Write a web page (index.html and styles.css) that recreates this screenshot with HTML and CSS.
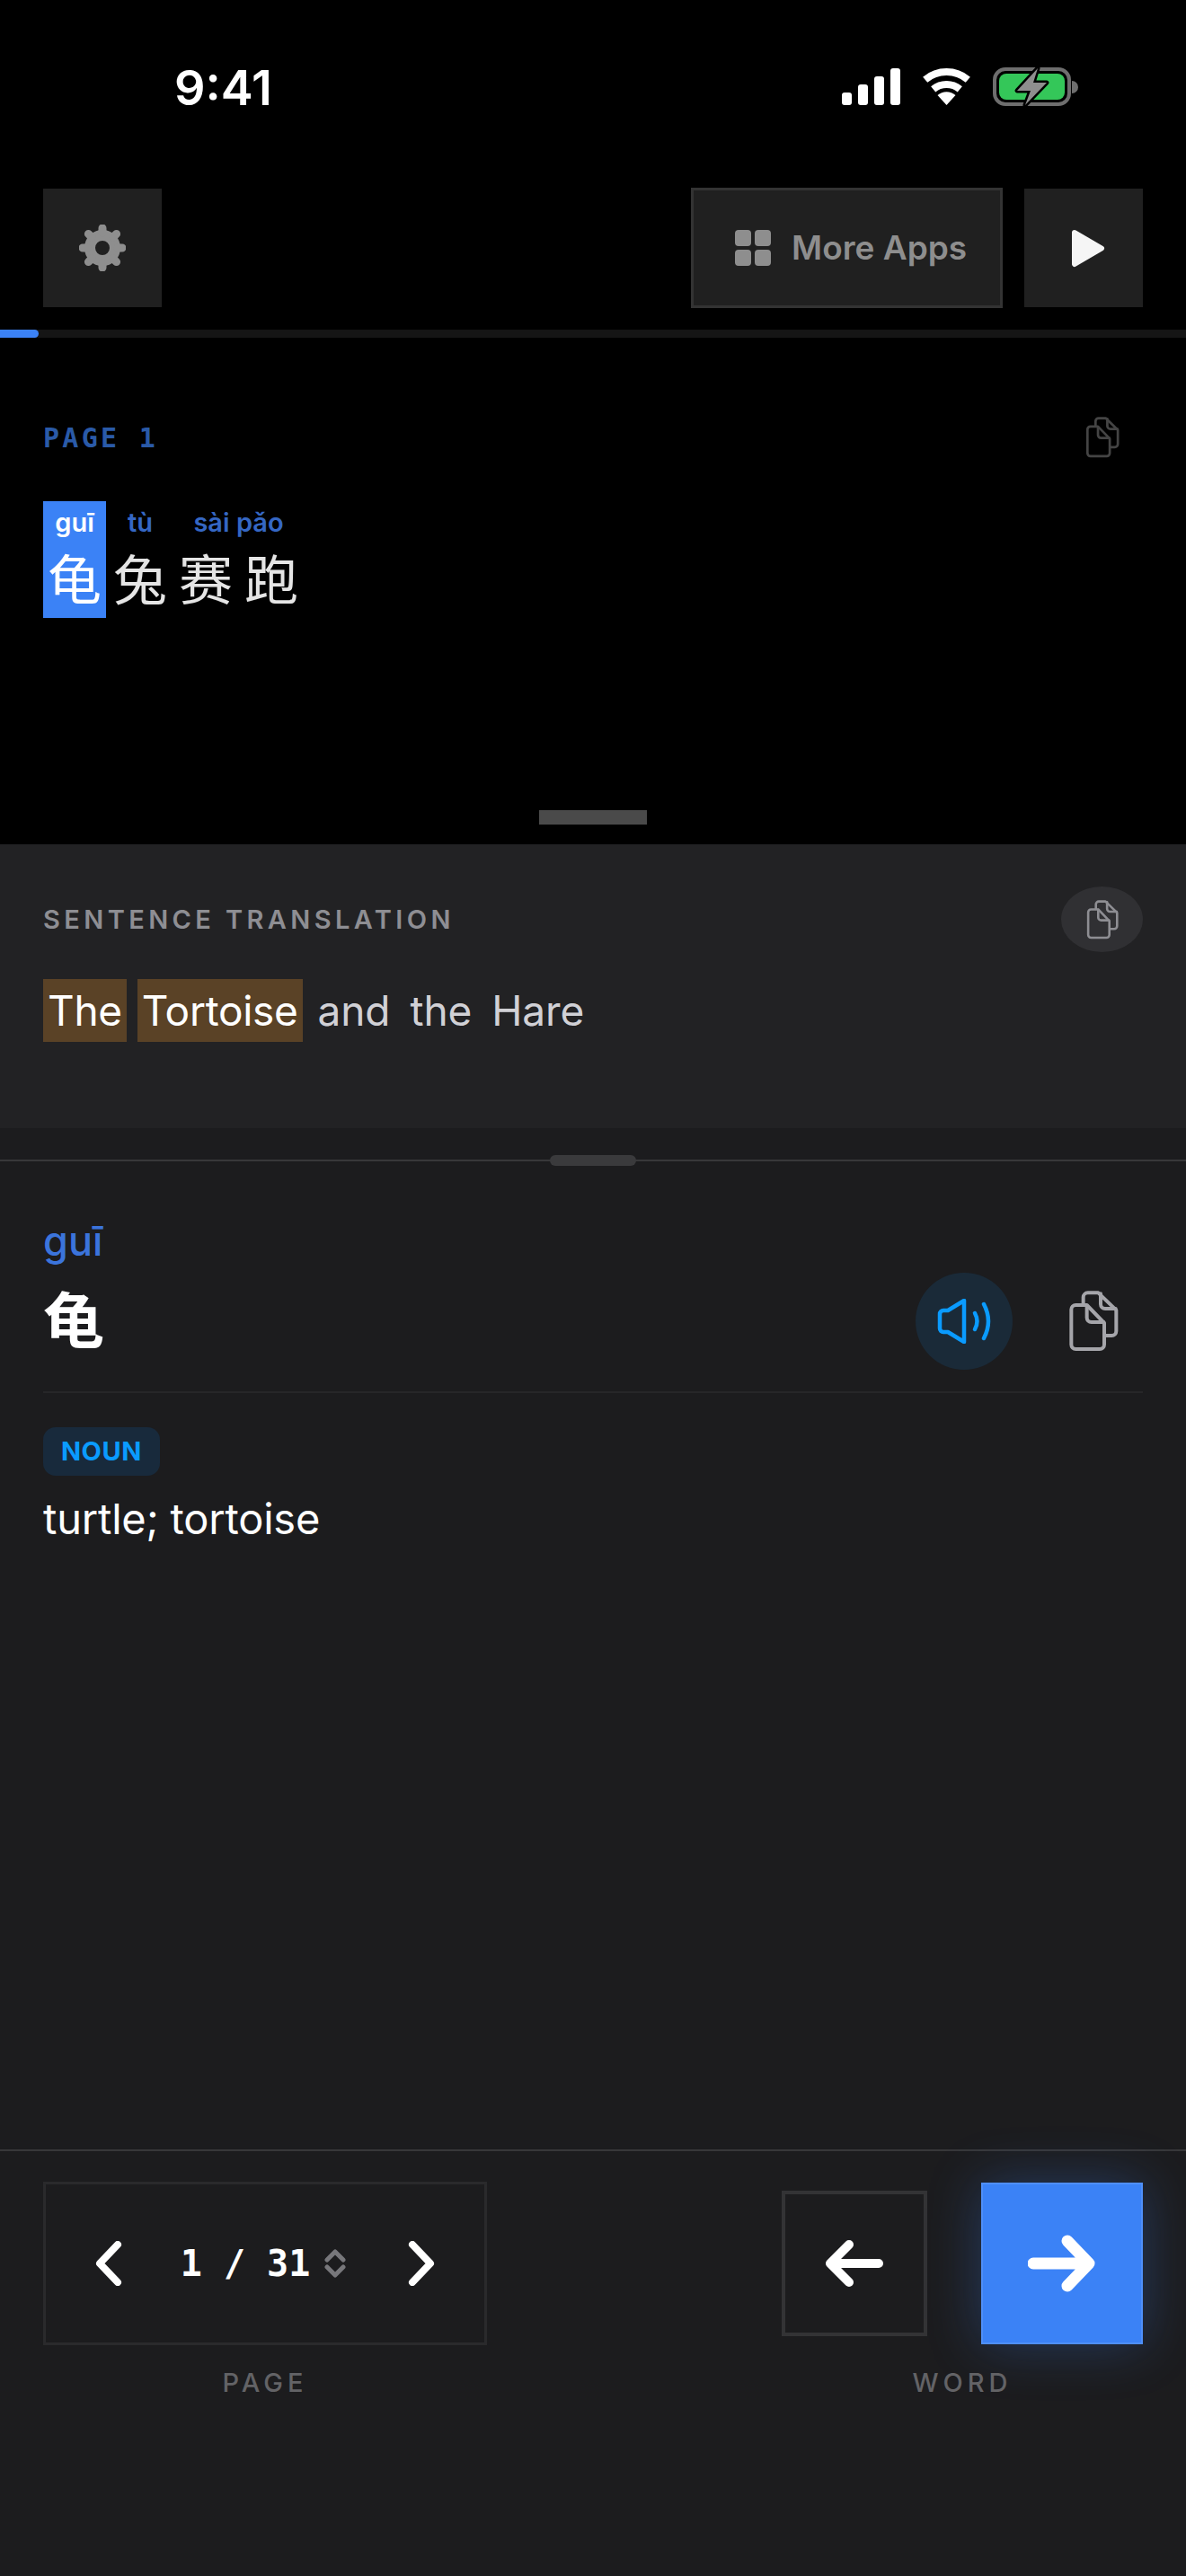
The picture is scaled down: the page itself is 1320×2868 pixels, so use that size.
FILE: index.html
```html
<!DOCTYPE html>
<html lang="en">
<head>
    <meta charset="UTF-8">
    <meta name="viewport" content="width=device-width, initial-scale=1.0">
    <title>Reader</title>
    <link rel="stylesheet" href="styles.css">
</head>
<body>

    <svg class="defs" width="0" height="0">
        <symbol id="copy" viewBox="0 0 168 204">
            <path d="M25 48H62L120 108V180a15 15 0 0 1-15 15H25a15 15 0 0 1-15-15V63a15 15 0 0 1 15-15Z" />
            <path d="M62 50V90a15 15 0 0 0 15 15H118" />
            <path d="M50 46V22a15 15 0 0 1 15-15H100L160 65V135a15 15 0 0 1-15 15H122" />
            <path d="M108 10V45a15 15 0 0 0 15 15H158" />
        </symbol>
    </svg>

    <div class="page">

        <section class="reading">
            <div class="status-bar">
                <span class="clock">9:41</span>
                <svg class="status-icons" viewBox="930 70 270 50" width="270" height="50">
                    <rect x="937" y="103" width="11" height="14" rx="3" fill="#fff" />
                    <rect x="955" y="94" width="11" height="23" rx="3" fill="#fff" />
                    <rect x="973" y="85" width="11" height="32" rx="3" fill="#fff" />
                    <rect x="991" y="76" width="11" height="41" rx="3" fill="#fff" />
                    <path d="M1029.7 88.7A37 37 0 0 1 1077.3 88.7M1038.7 99.4A23 23 0 0 1 1068.3 99.4" fill="none" stroke="#fff" stroke-width="8" />
                    <path d="M1053.5 117L1043.5 106A15 15 0 0 1 1063.5 106Z" fill="#fff" />
                    <rect x="1107" y="77" width="83" height="39" rx="12" fill="none" stroke="#6e6e6e" stroke-width="4" />
                    <rect x="1112" y="82" width="73" height="29" rx="8" fill="#34c759" />
                    <path d="M1193 90a7 7 0 0 1 0 14Z" fill="#6e6e6e" />
                    <path d="M1155 76L1132 101H1147L1141 117L1165 92H1150Z" fill="#8e8e8e" stroke="#000" stroke-width="5" paint-order="stroke" stroke-linejoin="round" />
                </svg>
            </div>

            <div class="toolbar">
                <button class="tool-btn">
                    <svg viewBox="0 0 52 52" width="52" height="52">
                        <circle cx="26" cy="26" r="14" fill="none" stroke="#8e8e8e" stroke-width="12" />
                        <path d="M26 4V9M26 48V43M4 26H9M48 26H43M10.4 10.4L14 14M41.6 41.6L38 38M41.6 10.4L38 14M10.4 41.6L14 38" stroke="#8e8e8e" stroke-width="9" stroke-linecap="round" />
                    </svg>
                </button>
                <div class="toolbar-right">
                    <button class="apps-btn">
                        <span class="apps-grid"><i></i><i></i><i></i><i></i></span>
                        <span class="apps-text">More Apps</span>
                    </button>
                    <button class="tool-btn">
                        <svg class="play-icon" viewBox="0 0 38 43" width="38" height="43">
                            <path d="M4 4L34 21.5L4 39Z" fill="#f5f5f5" stroke="#f5f5f5" stroke-width="6" stroke-linejoin="round" />
                        </svg>
                    </button>
                </div>
            </div>

            <div class="progress"><div class="progress-bar" style="width: 43px"></div></div>

            <div class="page-head">
                <span class="page-label">PAGE 1</span>
                <svg class="copy-icon copy-dim" width="38" height="46"><use href="#copy" /></svg>
            </div>

            <div class="hanzi-line">
                <div class="word active">
                    <span class="pinyin">guī</span>
                    <span class="hanzi">龟</span>
                </div>
                <div class="word">
                    <span class="pinyin">tù</span>
                    <span class="hanzi">兔</span>
                </div>
                <div class="word">
                    <span class="pinyin">sài pǎo</span>
                    <span class="hanzi">赛跑</span>
                </div>
            </div>

            <div class="reading-handle"></div>
        </section>

        <section class="sentence">
            <div class="sentence-head">
                <span class="section-label">SENTENCE TRANSLATION</span>
                <button class="copy-pill">
                    <svg class="copy-icon copy-soft" width="36" height="44"><use href="#copy" /></svg>
                </button>
            </div>
            <p class="sentence-text">
                <span class="hl">The</span>
                <span class="hl">Tortoise</span>
                <span>and</span>
                <span>the</span>
                <span>Hare</span>
            </p>
        </section>

        <section class="lookup">
            <div class="sheet-grip"><span class="grip-pill"></span></div>

            <div class="lookup-head">
                <div>
                    <div class="lookup-pinyin">guī</div>
                    <div class="lookup-hanzi">龟</div>
                </div>
                <div class="lookup-actions">
                    <button class="speak-btn">
                        <svg viewBox="0 0 62 50" width="62" height="50" fill="none" stroke="#0a9bff" stroke-width="4.5" stroke-linecap="round" stroke-linejoin="round">
                            <path d="M4 17a4 4 0 0 1 4-4H13L31 2V48L13 37H8a4 4 0 0 1-4-4Z" />
                            <path d="M43 16Q48 25 43 34" />
                            <path d="M53 6Q63 25 53 44" />
                        </svg>
                    </button>
                    <svg class="copy-icon copy-strong" width="56" height="68"><use href="#copy" /></svg>
                </div>
            </div>

            <div class="definition">
                <span class="pos-badge">NOUN</span>
                <p class="meaning">turtle; tortoise</p>
            </div>
        </section>

        <footer class="controls">
            <div class="control-group">
                <div class="stepper">
                    <svg viewBox="0 0 32 50" width="32" height="50" class="chev"><path d="M26 4L6 25L26 46" /></svg>
                    <div class="page-count">
                        <span class="count-text">1 / 31</span>
                        <svg viewBox="0 0 24 32" width="24" height="32" class="sort"><path d="M3 12L12 3L21 12M3 20L12 29L21 20" /></svg>
                    </div>
                    <svg viewBox="0 0 32 50" width="32" height="50" class="chev"><path d="M6 4L26 25L6 46" /></svg>
                </div>
                <span class="control-label">PAGE</span>
            </div>

            <div class="control-group">
                <div class="word-nav">
                    <button class="word-btn">
                        <svg viewBox="0 0 66 54" width="66" height="54" class="arrow"><path d="M60 27H6M27 6L6 27L27 48" /></svg>
                    </button>
                    <button class="word-btn primary">
                        <svg viewBox="0 0 76 64" width="76" height="64" class="arrow"><path d="M6 32H68M44 7L68 32L44 57" /></svg>
                    </button>
                </div>
                <span class="control-label">WORD</span>
            </div>
        </footer>

    </div>

</body>
</html>
```

FILE: styles.css
```css
* {
    box-sizing: border-box;
}

body {
    margin: 0;
    background-color: #1c1c1e;
    font-family: Inter, 'Noto Sans CJK SC', sans-serif;
    color: #fff;
}

button {
    padding: 0;
    border: none;
    font-family: inherit;
}

.defs {
    display: block;
}

.page {
    display: flex;
    flex-direction: column;
    width: 1320px;
    height: 2868px;
    overflow: hidden;
}

/* top black panel */
.reading {
    display: flex;
    flex-direction: column;
    height: 940px;
    background-color: #000;
}

.status-bar {
    display: flex;
    justify-content: space-between;
    align-items: center;
    height: 195px;
    padding: 0 120px 0 194px;
}

.clock {
    font-size: 54px;
    font-weight: 600;
    margin-top: -1px;
}

.status-icons {
    display: block;
    margin-bottom: 5px;
}

.toolbar {
    display: flex;
    justify-content: space-between;
    margin-top: 15px;
    padding: 0 48px;
}

.toolbar-right {
    display: flex;
    gap: 24px;
}

.tool-btn {
    display: flex;
    justify-content: center;
    align-items: center;
    width: 132px;
    height: 132px;
    background-color: #202020;
}

.play-icon {
    margin-left: 10px;
}

.apps-btn {
    display: flex;
    align-items: center;
    gap: 23px;
    width: 347px;
    height: 134px;
    padding-left: 46px;
    margin-top: -1px;
    background-color: #202020;
    border: 3px solid #333;
    color: #8e8e8e;
    font-size: 37px;
    font-weight: 600;
}

.apps-text {
    margin-bottom: 2px;
}

.apps-grid {
    display: grid;
    grid-template-columns: 18px 18px;
    gap: 4px;
}

.apps-grid i {
    display: block;
    height: 18px;
    border-radius: 4px;
    background-color: #8e8e8e;
}

.progress {
    height: 9px;
    margin-top: 24px;
    background-color: #151515;
}

.progress-bar {
    height: 100%;
    background-color: #3b82f6;
    border-radius: 0 5px 5px 0;
}

.page-head {
    display: flex;
    justify-content: space-between;
    align-items: center;
    margin-top: 88px;
    padding: 0 48px;
    height: 46px;
}

.page-label {
    font-family: 'DejaVu Sans Mono', monospace;
    font-size: 30px;
    font-weight: 700;
    letter-spacing: 3.3px;
    color: #2a5aa8;
}

.copy-icon {
    display: block;
    fill: none;
    stroke-width: 12;
    stroke-linejoin: round;
    stroke-linecap: round;
}

.copy-dim {
    stroke: #444;
    margin-right: 26px;
}

.copy-soft {
    stroke: #8e8e93;
}

.copy-strong {
    stroke: #a5a5aa;
}

.hanzi-line {
    display: flex;
    gap: 3px;
    margin-top: 48px;
    padding: 0 48px;
}

.word {
    display: flex;
    flex-direction: column;
    align-items: center;
    height: 130px;
    padding: 8px 5px 0;
    color: #e5e5e5;
}

.word.active {
    background-color: #3b82f6;
    color: #fff;
}

.pinyin {
    font-size: 29px;
    font-weight: 600;
    line-height: 32px;
    color: #3567c4;
}

.active .pinyin {
    color: #fff;
}

.hanzi {
    margin-top: 10px;
    margin-right: -13px;
    font-size: 60px;
    line-height: 76px;
    letter-spacing: 13px;
}

.reading-handle {
    width: 120px;
    height: 16px;
    margin: auto auto 22px;
    background-color: #4a4a4a;
}

/* sentence panel */
.sentence {
    height: 316px;
    padding: 47px 48px 0;
    background-color: #222224;
}

.sentence-head {
    display: flex;
    justify-content: space-between;
    align-items: center;
    height: 73px;
}

.section-label {
    font-size: 29px;
    font-weight: 600;
    letter-spacing: 4.4px;
    color: #8e8e93;
}

.copy-pill {
    display: flex;
    justify-content: center;
    align-items: center;
    width: 91px;
    height: 73px;
    border-radius: 50%;
    background-color: #303033;
}

.sentence-text {
    display: flex;
    margin: 30px 0 0;
    font-size: 46px;
    line-height: 70px;
    letter-spacing: -0.1px;
    color: #d1d1d6;
}

.sentence-text span {
    padding: 0 5px;
    margin-right: 12px;
}

.sentence-text .hl {
    background-color: #5a4226;
    color: #fff;
    letter-spacing: -0.3px;
}

/* word lookup */
.lookup {
    flex: 1;
    padding: 30px 48px 0;
}

.sheet-grip {
    position: relative;
    display: flex;
    justify-content: center;
    height: 12px;
    margin: 0 -48px;
}

.sheet-grip::before {
    content: "";
    position: absolute;
    left: 0;
    right: 0;
    top: 5px;
    height: 2px;
    background-color: #38383a;
}

.grip-pill {
    position: relative;
    width: 96px;
    height: 12px;
    border-radius: 6px;
    background-color: #3a3a3c;
}

.lookup-head {
    display: flex;
    justify-content: space-between;
    align-items: flex-end;
    padding-bottom: 24px;
    border-bottom: 2px solid #262628;
    margin-top: 58px;
}

.lookup-pinyin {
    font-size: 45px;
    font-weight: 500;
    line-height: 52px;
    color: #3b74dc;
}

.lookup-hanzi {
    margin-top: 9px;
    font-size: 68px;
    font-weight: 700;
    line-height: 108px;
}

.lookup-actions {
    display: flex;
    align-items: center;
    gap: 62px;
    padding-right: 27px;
}

.speak-btn {
    display: flex;
    justify-content: center;
    align-items: center;
    width: 108px;
    height: 108px;
    border-radius: 50%;
    background-color: #1a2a38;
}

.definition {
    margin-top: 38px;
}

.pos-badge {
    display: inline-block;
    padding: 0 20px;
    height: 54px;
    line-height: 54px;
    border-radius: 14px;
    background-color: #182a3c;
    color: #0a9bff;
    font-size: 29px;
    font-weight: 700;
    letter-spacing: 0.5px;
}

.meaning {
    margin: 15px 0 0;
    font-size: 47px;
    line-height: 66px;
    letter-spacing: -0.2px;
    color: #fff;
}

/* bottom controls */
.controls {
    display: flex;
    justify-content: space-between;
    height: 475px;
    padding: 34px 48px 0;
    border-top: 2px solid #38383a;
}

.control-group {
    display: flex;
    flex-direction: column;
    align-items: center;
}

.stepper {
    display: flex;
    justify-content: space-between;
    align-items: center;
    width: 494px;
    height: 182px;
    padding: 0 54px;
    border: 3px solid #2a2a2c;
}

.chev,
.arrow,
.sort {
    fill: none;
    stroke-linecap: round;
    stroke-linejoin: round;
}

.chev {
    stroke: #fff;
    stroke-width: 8;
}

.page-count {
    display: flex;
    align-items: center;
    margin-right: 4px;
}

.count-text {
    font-family: 'DejaVu Sans Mono', monospace;
    font-size: 40px;
    font-weight: 700;
}

.sort {
    margin-left: 16px;
    stroke: #77777b;
    stroke-width: 5;
}

.control-label {
    margin-top: 24px;
    font-size: 29px;
    font-weight: 500;
    letter-spacing: 5px;
    color: #636366;
}

.word-nav {
    display: flex;
    align-items: center;
    gap: 60px;
    height: 182px;
}

.word-btn {
    display: flex;
    justify-content: center;
    align-items: center;
    width: 162px;
    height: 162px;
    background: none;
    border: 4px solid #333335;
}

.word-btn.primary {
    width: 180px;
    height: 180px;
    background-color: #3b82f6;
    border: 2px solid #4f8ff8;
    box-shadow: 0 0 60px rgba(59, 130, 246, 0.3);
}

.arrow {
    stroke: #fff;
    stroke-width: 10;
}

.primary .arrow {
    stroke-width: 13;
}
```
